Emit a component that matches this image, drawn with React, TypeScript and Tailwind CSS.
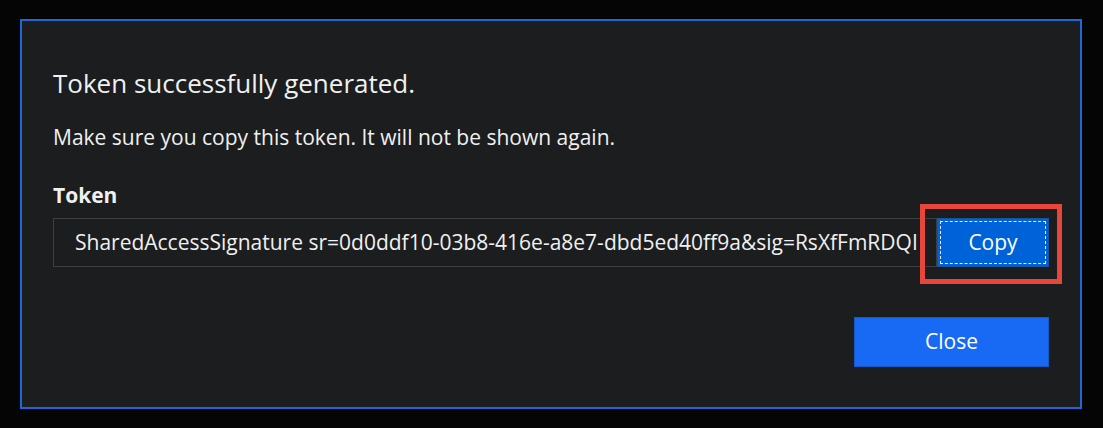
export default function App() {
  const token =
    'SharedAccessSignature sr=0d0ddf10-03b8-416e-a8e7-dbd5ed40ff9a&sig=RsXfFmRDQIk9fTq2xB%2FvNwL7eQmZpA%3D&se=1712345678&skn=default';

  return (
    <div
      className="h-[428px] w-[1103px] bg-[#050505] pl-[20px] pt-[19px]"
      style={{ fontFamily: '"Open Sans", "Noto Sans", sans-serif' }}
    >
      <div className="flex h-[390px] w-[1062px] flex-col border-2 border-[#1f66d8] bg-[#1b1d1f] px-[31px] pt-[44px] text-[#f0f0f0]">
        <h1 className="text-[26px] leading-[36px] font-normal">Token successfully generated.</h1>
        <p className="mt-[22px] text-[21px] leading-[28px]">
          Make sure you copy this token. It will not be shown again.
        </p>

        <label className="mt-[30px] text-[21px] leading-[28px] font-bold">Token</label>
        <div className="mt-[9px] flex h-[49px] items-stretch">
          <div className="flex min-w-0 flex-1 items-center border border-[#3c3e40] pl-[21px] pr-[17px]">
            <div className="overflow-hidden whitespace-nowrap text-[21px]">{token}</div>
          </div>
          <div className="relative">
            <button className="h-[49px] w-[112px] border border-[#1c4f9c] bg-[#0062d9] p-[2px] text-[21px] text-white">
              <span className="flex h-full w-full items-center justify-center border border-dashed border-white/90">
                Copy
              </span>
            </button>
            <div className="pointer-events-none absolute left-[-17px] top-[-14px] h-[80px] w-[142px] border-[5px] border-[#e8463a]" />
          </div>
        </div>

        <div className="mt-[50px] flex justify-end">
          <button className="h-[50px] w-[195px] border border-[#1558c8] bg-[#186af5] text-[21px] text-white">
            Close
          </button>
        </div>
      </div>
    </div>
  );
}
